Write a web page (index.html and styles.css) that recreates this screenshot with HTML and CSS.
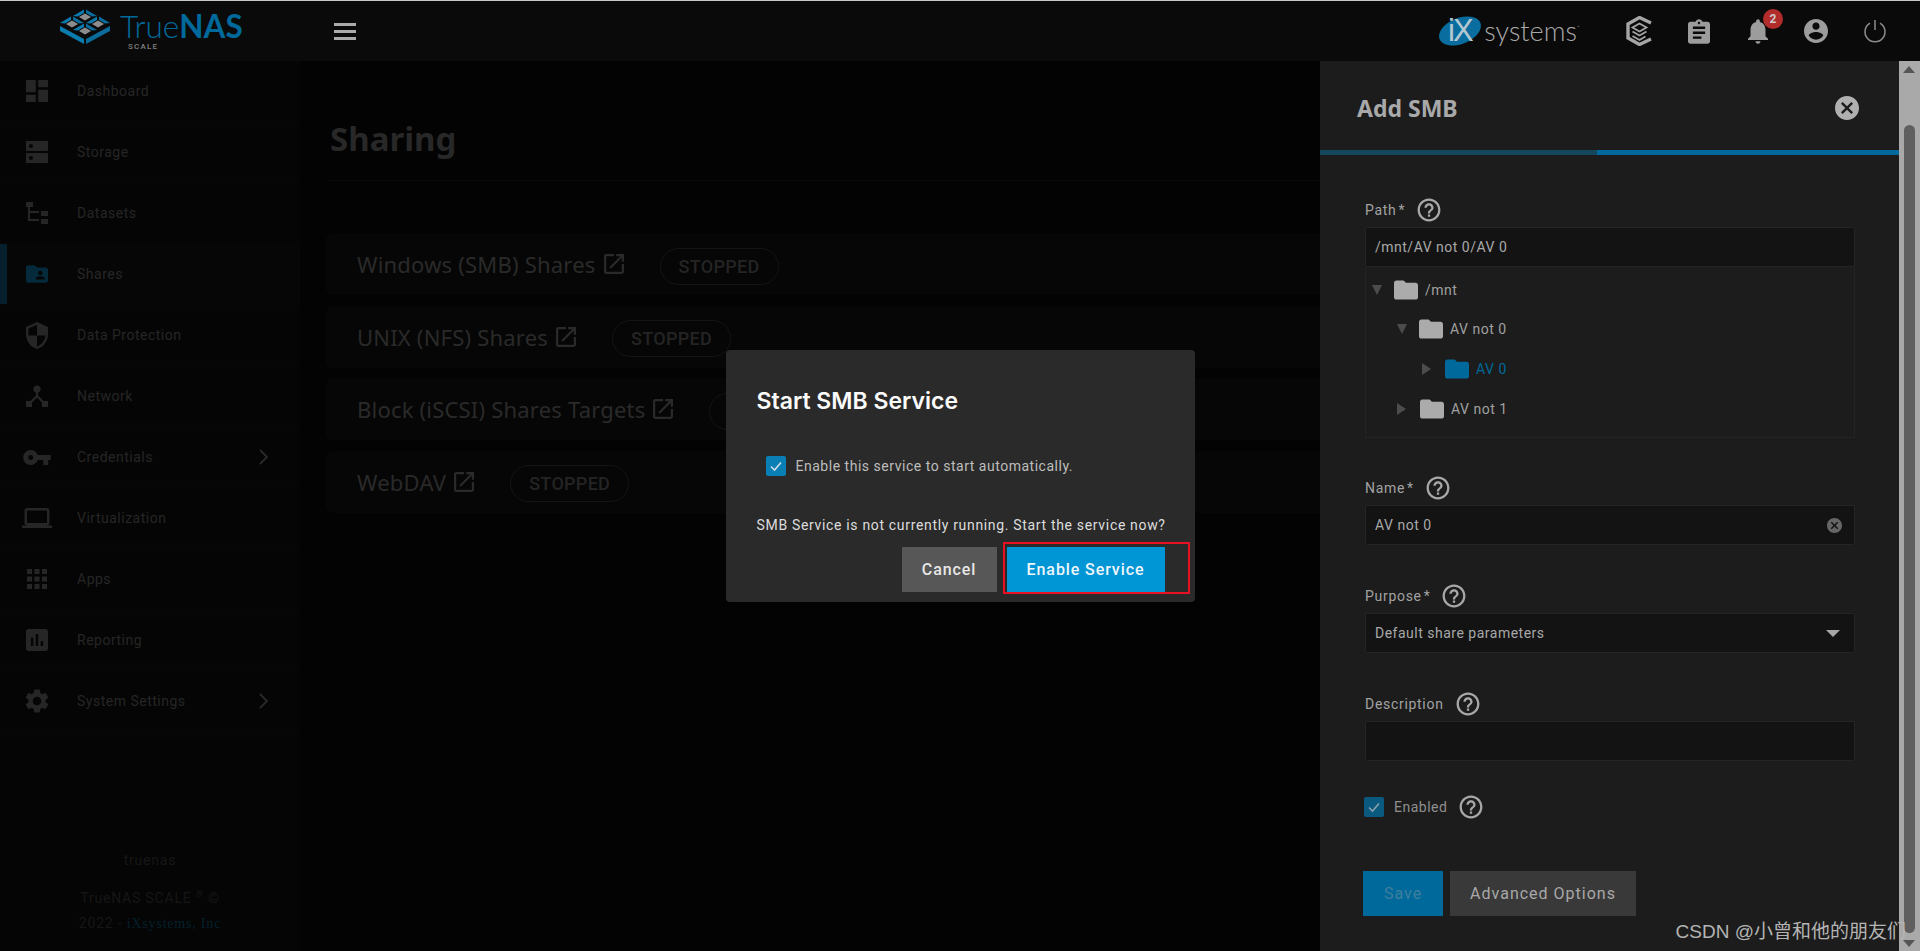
FILE: index.html
```html
<!DOCTYPE html>
<html lang="en">
<head>
<meta charset="utf-8">
<title>TrueNAS SCALE - Sharing</title>
<link rel="stylesheet" href="styles.css">
</head>
<body>
<svg class="defs" width="0" height="0" aria-hidden="true">
  <defs>
    <symbol id="i-help" viewBox="1.5 1.5 21 21"><path d="M11 18h2v-2h-2v2zm1-16C6.48 2 2 6.48 2 12s4.48 10 10 10 10-4.48 10-10S17.52 2 12 2zm0 18c-4.41 0-8-3.59-8-8s3.59-8 8-8 8 3.59 8 8-3.59 8-8 8zm0-14c-2.21 0-4 1.79-4 4h2c0-1.1.9-2 2-2s2 .9 2 2c0 2-3 1.75-3 5h2c0-2.25 3-2.5 3-5 0-2.21-1.79-4-4-4z"/></symbol>
    <symbol id="i-open" viewBox="3 3 18 18"><path d="M19 19H5V5h7V3H5c-1.11 0-2 .9-2 2v14c0 1.1.89 2 2 2h14c1.1 0 2-.9 2-2v-7h-2v7zM14 3v2h3.59l-9.83 9.83 1.41 1.41L19 6.41V10h2V3h-7z"/></symbol>
    <symbol id="i-folder" viewBox="2 4 20 16"><path d="M10 4H4c-1.1 0-1.99.9-1.99 2L2 18c0 1.1.9 2 2 2h16c1.1 0 2-.9 2-2V8c0-1.1-.9-2-2-2h-8l-2-2z"/></symbol>
    <symbol id="i-check" viewBox="0 0 20 20"><path d="M5 10.5l3.5 3.5L15 6.5" fill="none" stroke="currentColor" stroke-width="1.6"/></symbol>
    <symbol id="i-chev" viewBox="0 0 12 18"><path d="M2 2l7 7-7 7" fill="none" stroke="currentColor" stroke-width="1.8"/></symbol>
    <g id="tile">
      <polygon points="-12,-1 -1,-7.5 -1,-4 -7,-.5" fill="#0b7bad"/>
      <polygon points="1,-7.5 12,-1 7,-.5 1,-4" fill="#0a6c9a"/>
      <polygon points="0,-3.5 6,0 0,3.5 -6,0" fill="#8d8d8d"/>
    </g>
  </defs>
</svg>

<header class="topbar">
  <div class="brand">
    <svg class="brand-mark" viewBox="0 0 50 36" width="50" height="36" aria-hidden="true">
      <use href="#tile" x="25" y="9"/>
      <use href="#tile" x="12" y="16"/>
      <use href="#tile" x="38" y="16"/>
      <use href="#tile" x="25" y="23"/>
      <polygon points="0,18 24,31 24,36 0,23" fill="#0b7bad"/>
      <polygon points="26,31 50,18 50,23 26,36" fill="#0a6c9a"/>
    </svg>
    <div class="brand-word">
      <div class="brand-name">True<b>NAS</b></div>
      <div class="brand-sub">SCALE</div>
    </div>
  </div>
  <button class="menu-btn" aria-label="Menu"><span></span><span></span><span></span></button>
  <div class="top-right">
    <div class="ix">
      <div class="ix-oval"><span>iX</span></div>
      <span class="ix-word">systems</span><span class="ix-tm">™</span>
    </div>
    <div class="top-icons">
      <svg class="t-icon tc" viewBox="0 0 27 30" width="27" height="30" aria-hidden="true">
        <path d="M25 7L13.5 1.5 2 8v14l11.5 6.5L25 23" fill="none" stroke="currentColor" stroke-width="3.4"/>
        <path d="M13.5 7.5l7 4-7 4-7-4zM6.5 15.5l7 4 7-4M6.5 20l7 4 6-3.5" fill="none" stroke="currentColor" stroke-width="1.8"/>
      </svg>
      <svg class="t-icon clip" viewBox="3 1 18 20" width="22" height="25" aria-hidden="true"><path d="M19 3h-4.18C14.4 1.84 13.3 1 12 1c-1.3 0-2.4.84-2.82 2H5c-1.1 0-2 .9-2 2v14c0 1.1.9 2 2 2h14c1.1 0 2-.9 2-2V5c0-1.1-.9-2-2-2zm-7 0c.55 0 1 .45 1 1s-.45 1-1 1-1-.45-1-1 .45-1 1-1zm2 14H7v-2h7v2zm3-4H7v-2h10v2zm0-4H7V7h10v2z"/></svg>
      <div class="bell">
        <svg class="t-icon" viewBox="4 2.5 16 19.5" width="20" height="25" aria-hidden="true"><path d="M12 22c1.1 0 2-.9 2-2h-4c0 1.1.89 2 2 2zm6-6v-5c0-3.07-1.64-5.64-4.5-6.32V4c0-.83-.67-1.5-1.5-1.5s-1.5.67-1.5 1.5v.68C7.63 5.36 6 7.92 6 11v5l-2 2v1h16v-1l-2-2z"/></svg>
        <span class="badge">2</span>
      </div>
      <svg class="t-icon user" viewBox="2 2 20 20" width="24" height="24" aria-hidden="true"><path d="M12 2C6.48 2 2 6.48 2 12s4.48 10 10 10 10-4.48 10-10S17.52 2 12 2zm0 3c1.66 0 3 1.34 3 3s-1.34 3-3 3-3-1.34-3-3 1.34-3 3-3zm0 14.2c-2.5 0-4.71-1.28-6-3.22.03-1.99 4-3.08 6-3.08 1.99 0 5.97 1.09 6 3.08-1.29 1.94-3.5 3.22-6 3.22z"/></svg>
      <svg class="t-icon power" viewBox="0 0 24 24" width="24" height="24" aria-hidden="true"><path d="M7 4.2a10 10 0 1 0 10 0M12 1v10" fill="none" stroke="currentColor" stroke-width="1.5"/></svg>
    </div>
  </div>
</header>

<div class="shell">
  <aside class="sidebar">
    <nav class="nav">
      <a class="nav-item"><svg class="nav-icon" viewBox="3 3 18 18"><path d="M3 13h8V3H3v10zm0 8h8v-6H3v6zm10 0h8V11h-8v10zm0-18v6h8V3h-8z"/></svg><span>Dashboard</span></a>
      <a class="nav-item"><svg class="nav-icon" viewBox="0 0 22 22"><path fill-rule="evenodd" d="M0 0h22v10H0zM0 12h22v10H0zM5 3a2 2 0 1 0 0 4 2 2 0 0 0 0-4zM5 15a2 2 0 1 0 0 4 2 2 0 0 0 0-4z"/></svg><span>Storage</span></a>
      <a class="nav-item"><svg class="nav-icon" viewBox="0 0 22 22"><path d="M0 0h7v5H0zM15 9h7v5h-7zM15 17h7v5h-7zM2 5h2v4h9v2H4v6h9v2H2z"/></svg><span>Datasets</span></a>
      <a class="nav-item active"><svg class="nav-icon" viewBox="2 4 20 16"><path d="M20 6h-8l-2-2H4c-1.1 0-1.99.9-1.99 2L2 18c0 1.1.9 2 2 2h16c1.1 0 2-.9 2-2V8c0-1.1-.9-2-2-2zm-5 3c1.1 0 2 .9 2 2s-.9 2-2 2-2-.9-2-2 .9-2 2-2zm4 8h-8v-1c0-1.33 2.67-2 4-2s4 .67 4 2v1z"/></svg><span>Shares</span></a>
      <a class="nav-item"><svg class="nav-icon tall" viewBox="3 1 18 22"><path d="M12 1L3 5v6c0 5.55 3.84 10.74 9 12 5.16-1.26 9-6.45 9-12V5l-9-4zm0 10.99h7c-.53 4.12-3.28 7.79-7 8.94V12H5V6.3l7-3.11v8.8z"/></svg><span>Data Protection</span></a>
      <a class="nav-item"><svg class="nav-icon" viewBox="0 0 22 22"><circle cx="11" cy="4" r="3.6"/><path d="M0 16h6v6H0zM16 16h6v6h-6z"/><path d="M11 6v6M11 11l-7 7M11 11l7 7" stroke="currentColor" stroke-width="2.4" fill="none"/></svg><span>Network</span></a>
      <a class="nav-item has-sub"><svg class="nav-icon wide" viewBox="1 6 22 12"><path d="M12.65 10C11.83 7.67 9.61 6 7 6c-3.31 0-6 2.69-6 6s2.69 6 6 6c2.61 0 4.83-1.67 5.65-4H17v4h4v-4h2v-4H12.65zM7 14c-1.1 0-2-.9-2-2s.9-2 2-2 2 .9 2 2-.9 2-2 2z"/></svg><span>Credentials</span><svg class="nav-chev"><use href="#i-chev"/></svg></a>
      <a class="nav-item"><svg class="nav-icon laptop" viewBox="0 4 24 16"><path d="M20 18c1.1 0 1.99-.9 1.99-2L22 6c0-1.1-.9-2-2-2H4c-1.1 0-2 .9-2 2v10c0 1.1.9 2 2 2H0v2h24v-2h-4zM4 6h16v10H4V6z"/></svg><span>Virtualization</span></a>
      <a class="nav-item"><svg class="nav-icon apps" viewBox="4 4 16 16"><path d="M4 8h4V4H4v4zm6 12h4v-4h-4v4zm-6 0h4v-4H4v4zm0-6h4v-4H4v4zm6 0h4v-4h-4v4zm6-10v4h4V4h-4zm-6 4h4V4h-4v4zm6 6h4v-4h-4v4zm0 6h4v-4h-4v4z"/></svg><span>Apps</span></a>
      <a class="nav-item"><svg class="nav-icon" viewBox="3 3 18 18"><path d="M19 3H5c-1.1 0-2 .9-2 2v14c0 1.1.9 2 2 2h14c1.1 0 2-.9 2-2V5c0-1.1-.9-2-2-2zM9 17H7v-7h2v7zm4 0h-2V7h2v10zm4 0h-2v-4h2v4z"/></svg><span>Reporting</span></a>
      <a class="nav-item has-sub"><svg class="nav-icon gear" viewBox="2.5 2 19 20"><path d="M19.14 12.94c.04-.3.06-.61.06-.94 0-.32-.02-.64-.07-.94l2.03-1.58c.18-.14.23-.41.12-.61l-1.92-3.32c-.12-.22-.37-.29-.59-.22l-2.39.96c-.5-.38-1.03-.7-1.62-.94l-.36-2.54c-.04-.24-.24-.41-.48-.41h-3.84c-.24 0-.43.17-.47.41l-.36 2.54c-.59.24-1.13.57-1.62.94l-2.39-.96c-.22-.08-.47 0-.59.22L2.74 8.87c-.12.21-.08.47.12.61l2.03 1.58c-.05.3-.09.63-.09.94s.02.64.07.94l-2.03 1.58c-.18.14-.23.41-.12.61l1.92 3.32c.12.22.37.29.59.22l2.39-.96c.5.38 1.03.7 1.62.94l.36 2.54c.05.24.24.41.48.41h3.84c.24 0 .44-.17.47-.41l.36-2.54c.59-.24 1.13-.56 1.62-.94l2.39.96c.22.08.47 0 .59-.22l1.92-3.32c.12-.22.07-.47-.12-.61l-2.01-1.58zM12 15.6c-1.98 0-3.6-1.62-3.6-3.6s1.62-3.6 3.6-3.6 3.6 1.62 3.6 3.6-1.62 3.6-3.6 3.6z"/></svg><span>System Settings</span><svg class="nav-chev"><use href="#i-chev"/></svg></a>
    </nav>
    <footer class="side-foot">
      <div class="host">truenas</div>
      <div class="copy">TrueNAS SCALE <sup>®</sup> ©</div>
      <div class="copy">2022 - <a class="ixlink">iXsystems, Inc</a></div>
    </footer>
  </aside>

  <main class="main">
    <h1 class="page-title">Sharing</h1>
    <div class="cards">
      <section class="card"><span class="card-title">Windows (SMB) Shares</span><svg class="open"><use href="#i-open"/></svg><span class="pill">STOPPED</span></section>
      <section class="card"><span class="card-title">UNIX (NFS) Shares</span><svg class="open"><use href="#i-open"/></svg><span class="pill">STOPPED</span></section>
      <section class="card"><span class="card-title">Block (iSCSI) Shares Targets</span><svg class="open"><use href="#i-open"/></svg><span class="pill">STOPPED</span></section>
      <section class="card"><span class="card-title">WebDAV</span><svg class="open"><use href="#i-open"/></svg><span class="pill">STOPPED</span></section>
    </div>
  </main>

  <aside class="panel">
    <div class="panel-body">
      <div class="panel-head">
        <h2>Add SMB</h2>
        <svg class="close" viewBox="2 2 20 20" width="24" height="24" aria-hidden="true"><path d="M12 2C6.47 2 2 6.47 2 12s4.47 10 10 10 10-4.47 10-10S17.53 2 12 2zm5 13.59L15.59 17 12 13.41 8.41 17 7 15.59 10.59 12 7 8.41 8.41 7 12 10.59 15.59 7 17 8.41 13.41 12 17 15.59z"/></svg>
      </div>
      <div class="progress"><div class="progress-done"></div><div class="progress-todo"></div></div>
      <form class="form">
        <div class="field field-tree">
          <div class="label">Path<i>*</i><svg class="help"><use href="#i-help"/></svg></div>
          <div class="input">/mnt/AV not 0/AV 0</div>
          <div class="tree">
            <div class="tree-row"><span class="tri down"></span><svg class="folder"><use href="#i-folder"/></svg><span>/mnt</span></div>
            <div class="tree-row lv2"><span class="tri down"></span><svg class="folder"><use href="#i-folder"/></svg><span>AV not 0</span></div>
            <div class="tree-row lv3 sel"><span class="tri"></span><svg class="folder"><use href="#i-folder"/></svg><span>AV 0</span></div>
            <div class="tree-row lv2"><span class="tri"></span><svg class="folder"><use href="#i-folder"/></svg><span>AV not 1</span></div>
          </div>
        </div>
        <div class="field">
          <div class="label">Name<i>*</i><svg class="help"><use href="#i-help"/></svg></div>
          <div class="input split">AV not 0
            <svg class="clear" viewBox="2 2 20 20" width="15" height="15" aria-hidden="true"><path d="M12 2C6.47 2 2 6.47 2 12s4.47 10 10 10 10-4.47 10-10S17.53 2 12 2zm5 13.59L15.59 17 12 13.41 8.41 17 7 15.59 10.59 12 7 8.41 8.41 7 12 10.59 15.59 7 17 8.41 13.41 12 17 15.59z"/></svg>
          </div>
        </div>
        <div class="field">
          <div class="label">Purpose<i>*</i><svg class="help"><use href="#i-help"/></svg></div>
          <div class="input split select">Default share parameters<span class="caret"></span></div>
        </div>
        <div class="field">
          <div class="label">Description<svg class="help"><use href="#i-help"/></svg></div>
          <div class="input"></div>
        </div>
        <div class="check-row">
          <span class="box dim"><svg><use href="#i-check"/></svg></span>
          <span class="check-text">Enabled</span>
          <svg class="help"><use href="#i-help"/></svg>
        </div>
        <div class="actions">
          <span class="btn btn-save">Save</span>
          <span class="btn btn-adv">Advanced Options</span>
        </div>
      </form>
    </div>
    <div class="scrollbar">
      <span class="sb-up"></span>
      <span class="sb-thumb"></span>
      <span class="sb-down"></span>
    </div>
  </aside>
</div>

<div class="overlay">
  <div class="dialog">
    <h3>Start SMB Service</h3>
    <div class="dialog-check">
      <span class="box"><svg><use href="#i-check"/></svg></span>
      <span>Enable this service to start automatically.</span>
    </div>
    <p>SMB Service is not currently running. Start the service now?</p>
    <div class="dialog-actions">
      <span class="dbtn dbtn-cancel">Cancel</span>
      <span class="dbtn dbtn-enable">Enable Service</span>
    </div>
  </div>
</div>
<div class="watermark">CSDN @小曾和他的朋友们</div>
</body>
</html>
```

FILE: styles.css
```css
* { box-sizing: border-box; }
html, body { height: 100%; }
body {
  margin: 0;
  height: 951px;
  overflow: hidden;
  position: relative;
  display: flex;
  flex-direction: column;
  background: #030303;
  font-family: Roboto, "Liberation Sans", sans-serif;
  font-size: 14px;
  color: #aaa;
}
.defs { position: absolute; }
svg { fill: currentColor; display: block; }

/* top bar */
.topbar {
  flex: 0 0 61px;
  display: flex;
  align-items: center;
  background: #0a0a0a;
  border-top: 1px solid #c8c8c8;
}
.brand { width: 300px; flex: none; display: flex; align-items: flex-start; padding-left: 60px; }
.brand-mark { margin-top: -3px; }
.brand-word { margin-left: 10px; margin-top: -1px; }
.brand-name {
  font-family: Lato, sans-serif;
  font-size: 31.5px;
  font-weight: 300;
  line-height: 32px;
  color: #00699b;
}
.brand-name b { font-weight: 700; }
.brand-sub {
  font-size: 8px;
  line-height: 8px;
  font-weight: 500;
  letter-spacing: 1.2px;
  color: #808080;
  margin: 1px 0 0 8px;
}
.menu-btn {
  width: 22px;
  height: 17px;
  margin-left: 34px;
  padding: 0;
  border: 0;
  background: none;
  display: flex;
  flex-direction: column;
  justify-content: space-between;
}
.menu-btn span { display: block; height: 3px; background: #aaa; }
.top-right { margin-left: auto; display: flex; align-items: center; padding-right: 33px; }
.ix { display: flex; align-items: center; margin-right: 46px; }
.ix-oval {
  width: 44px;
  height: 26px;
  border-radius: 50%;
  background: #0a6d9f;
  transform: rotate(-22deg);
  display: flex;
  align-items: center;
  justify-content: center;
}
.ix-oval span {
  transform: rotate(22deg);
  font-family: "Liberation Sans", sans-serif;
  font-size: 31px;
  line-height: 26px;
  letter-spacing: -2px;
  color: #b4c8d2;
}
.ix-word {
  font-family: Lato, sans-serif;
  font-weight: 300;
  font-size: 27px;
  line-height: 30px;
  color: #a8a8a8;
  margin-left: 2px;
}
.ix-tm { font-size: 5px; color: #888; align-self: flex-start; margin-top: 8px; }
.top-icons { display: flex; align-items: center; }
.t-icon { color: #9c9c9c; }
.tc { color: #a5a5a5; }
.clip { margin-left: 35px; }
.bell { position: relative; margin-left: 38px; }
.badge {
  position: absolute;
  left: 15px;
  top: -10px;
  width: 20px;
  height: 20px;
  border-radius: 50%;
  background: #b32c2c;
  color: #ccc;
  font-size: 12px;
  font-weight: 700;
  line-height: 20px;
  text-align: center;
}
.user { margin-left: 36px; }
.power { margin-left: 35px; color: #8c8c8c; }

/* shell */
.shell { flex: 1; display: flex; min-height: 0; }

/* sidebar */
.sidebar {
  width: 300px;
  flex: none;
  display: flex;
  flex-direction: column;
  background: #050505;
}
.nav-item {
  height: 61px;
  display: flex;
  align-items: center;
  padding-left: 26px;
  color: #262626;
  border-bottom: 1px solid #070707;
  position: relative;
}
.nav-item > span { margin-left: 29px; letter-spacing: .5px; }
.nav-icon { width: 22px; height: 22px; flex: none; }
.nav-icon.tall { height: 27px; }
.nav-icon.wide { width: 28px; height: 15px; margin: 0 -3px; }
.nav-icon.laptop { width: 30px; height: 20px; margin: 0 -4px; }
.nav-icon.apps { width: 20px; height: 20px; margin: 0 1px; }
.nav-icon.gear { width: 24px; height: 24px; margin: 0 -1px; }
.nav-chev { width: 12px; height: 18px; margin-left: auto; margin-right: 30px; color: #2a2a2a; fill: none; }
.active { background: #060606; box-shadow: inset 7px 0 0 #05202c; color: #262626; }
.active .nav-icon { color: #042a3c; }
.side-foot { margin-top: auto; padding-bottom: 15px; text-align: center; color: #161616; letter-spacing: .8px; }
.host { line-height: 20px; margin-bottom: 16px; }
.copy { line-height: 25px; }
.copy sup { font-size: 9px; line-height: 0; }
.ixlink { color: #04202c; font-family: "Liberation Serif", serif; font-size: 14px; }

/* main */
.main { flex: 1; min-width: 0; padding: 0 0 0 26px; background: #030303; }
.page-title {
  margin: 0;
  height: 120px;
  padding: 54px 0 0 4px;
  font-family: "Noto Sans", sans-serif;
  font-size: 33px;
  font-weight: 700;
  line-height: 48px;
  color: #282828;
  border-bottom: 1px solid #080808;
}
.cards { display: flex; flex-direction: column; gap: 10.67px; margin-top: 52px; }
.card {
  height: 62px;
  display: flex;
  align-items: center;
  padding-left: 31px;
  background: #060606;
  border-radius: 6px 0 0 6px;
  color: #2a2a2a;
}
.card-title { font-family: "Noto Sans", sans-serif; font-size: 22px; letter-spacing: .2px; }
.open { width: 20px; height: 20px; margin-left: 8px; flex: none; }
.pill {
  margin-left: 36px;
  width: 119px;
  height: 37px;
  border: 1px solid #141414;
  border-radius: 19px;
  font-size: 18px;
  font-weight: 500;
  line-height: 35px;
  text-align: center;
  color: #242424;
  letter-spacing: .3px;
  position: relative;
  top: 2px;
}

/* panel */
.panel { width: 600px; flex: none; display: flex; background: #1c1c1c; }
.panel-body { flex: 1; min-width: 0; display: flex; flex-direction: column; }
.panel-head {
  height: 89px;
  display: flex;
  align-items: center;
  justify-content: space-between;
  padding: 4px 40px 0 37px;
}
.panel-head h2 {
  margin: 0;
  font-family: "Noto Sans", sans-serif;
  font-size: 23px;
  font-weight: 700;
  color: #a9a9a9;
}
.close { color: #b0b0b0; }
.progress { display: flex; height: 5px; }
.progress-done { width: 277px; background: #14465c; }
.progress-todo { flex: 1; background: #00699b; }
.form { padding: 43px 44px 0 45px; }
.field { margin-bottom: 39px; }
.field-tree { margin-bottom: 38px; }
.label { display: flex; align-items: center; height: 24px; margin-bottom: 5px; letter-spacing: .7px; color: #a2a2a2; }
.label i { font-style: normal; margin-left: 2px; }
.help { width: 24px; height: 24px; margin-left: 12px; flex: none; color: #a8a8a8; }
.input {
  height: 40px;
  padding: 0 9px;
  display: flex;
  align-items: center;
  background: #131313;
  border: 1px solid #242424;
  border-radius: 2px;
  color: #a8a8a8;
  letter-spacing: .5px;
}
.split { justify-content: space-between; padding-right: 12px; }
.clear { color: #666; }
.select { padding-right: 14px; }
.caret { width: 0; height: 0; border: 7px solid transparent; border-top-color: #a8a8a8; border-bottom: 0; }
.tree {
  height: 171px;
  padding-top: 3px;
  border: 1px solid #242424;
  border-top: 0;
  color: #a0a0a0;
}
.tree-row { height: 39.67px; display: flex; align-items: center; padding-left: 6px; letter-spacing: .5px; }
.lv2 { padding-left: 31px; }
.lv3 { padding-left: 56px; }
.tri {
  width: 0;
  height: 0;
  flex: none;
  margin-right: 14px;
  border: 6px solid transparent;
  border-left: 9px solid #4c4c4c;
  border-right: 0;
}
.tri.down {
  border: 5px solid transparent;
  border-top: 10px solid #4c4c4c;
  border-bottom: 0;
  margin-right: 12px;
}
.folder { width: 24px; height: 20px; margin-right: 7px; flex: none; color: #ababab; }
.sel { color: #00699b; }
.sel .folder { color: #00699b; }
.check-row { display: flex; align-items: center; height: 24px; margin-top: -5px; color: #8f8f8f; }
.box {
  width: 20px;
  height: 20px;
  flex: none;
  border-radius: 2px;
  background: #0a7fb5;
  color: #cfdfe8;
}
.box svg { width: 20px; height: 20px; fill: none; }
.box.dim { background: #0a5a7f; color: #8aa0ad; margin-left: -1px; }
.check-text { margin-left: 10px; letter-spacing: .5px; }
.actions { display: flex; gap: 7px; margin-top: 52px; margin-left: -2px; }
.btn { height: 45px; display: flex; align-items: center; justify-content: center; font-size: 16px; letter-spacing: 1px; }
.btn-save { width: 80px; background: #00699b; color: #3f7f9d; }
.btn-adv { width: 186px; background: #393939; color: #a8a8a8; }

/* scrollbar */
.scrollbar {
  width: 21px;
  flex: none;
  display: flex;
  flex-direction: column;
  align-items: center;
  background: #a9a9a9;
  padding: 5px 1px 4px 0;
}
.sb-up, .sb-down { width: 0; height: 0; flex: none; border: 6px solid transparent; border-top: 0; border-bottom: 7px solid #555; }
.sb-down { border-bottom: 0; border-top: 7px solid #555; }
.sb-thumb { width: 11px; flex: 1; margin: 52px 0 7px; background: #5f5f5f; border-radius: 6px; }

/* dialog */
.overlay { position: absolute; inset: 0; display: flex; align-items: center; justify-content: center; }
.dialog {
  width: 469px;
  height: 252px;
  padding: 36px 30px 0 31px;
  background: #2a2a2a;
  border-radius: 4px;
  color: #ddd;
}
.dialog h3 {
  margin: 0;
  font-family: Inter, sans-serif;
  font-size: 23px;
  font-weight: 600;
  line-height: 30px;
  color: #fafafa;
}
.dialog-check {
  display: flex;
  align-items: center;
  gap: 10px;
  margin: 40px 0 0 9px;
  color: #bdbdbd;
  letter-spacing: .52px;
}
.dialog p { margin: 39px 0 0; line-height: 20px; letter-spacing: .67px; white-space: nowrap; }
.dialog-actions { display: flex; justify-content: flex-end; gap: 10px; margin-top: 12px; }
.dbtn { height: 45px; display: flex; align-items: center; justify-content: center; font-size: 16px; font-weight: 500; letter-spacing: .9px; }
.dbtn-cancel { width: 95px; background: #575757; color: #e8e8e8; }
.dbtn-enable { width: 158px; background: #0095d5; color: #eef6fa; position: relative; }
.dbtn-enable::after {
  content: "";
  position: absolute;
  top: -5px;
  left: -4px;
  right: -25px;
  bottom: -2px;
  border: 2px solid #e81123;
}
.watermark {
  position: absolute;
  right: 14px;
  top: 919px;
  font-family: "Liberation Sans", "Noto Sans CJK SC", sans-serif;
  font-size: 19px;
  line-height: 26px;
  color: #b4b4b4;
  white-space: nowrap;
}
```
